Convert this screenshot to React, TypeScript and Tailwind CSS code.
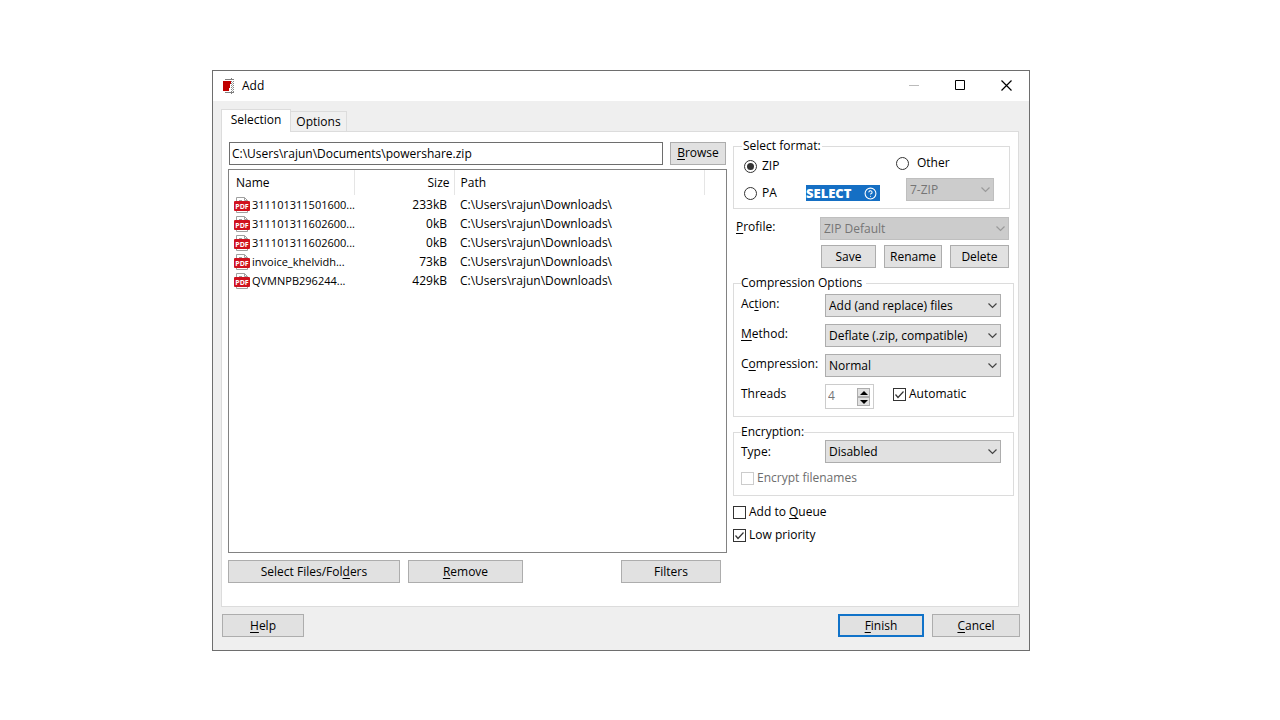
import { useState } from 'react';
import type { ReactNode } from 'react';
import clsx from 'clsx';
import { CircleHelp } from 'lucide-react';

interface FileEntry {
  name: string;
  size: string;
  path: string;
}

const files: FileEntry[] = [
  { name: '311101311501600...', size: '233kB', path: 'C:\\Users\\rajun\\Downloads\\' },
  { name: '311101311602600...', size: '0kB', path: 'C:\\Users\\rajun\\Downloads\\' },
  { name: '311101311602600...', size: '0kB', path: 'C:\\Users\\rajun\\Downloads\\' },
  { name: 'invoice_khelvidh...', size: '73kB', path: 'C:\\Users\\rajun\\Downloads\\' },
  { name: 'QVMNPB296244...', size: '429kB', path: 'C:\\Users\\rajun\\Downloads\\' },
];

function AppIcon() {
  return (
    <svg width="14" height="16" viewBox="0 0 14 16" shapeRendering="crispEdges" aria-hidden="true">
      <path d="M3 1h9v1H3zM3 14h9v1H3zM9 0h1v1H9zM9 15h1v1H9z" fill="#808080" />
      <path d="M1 3h8v3H8v4H7v3H1z" fill="#c00000" />
      <path d="M9.500 3v11M11.500 3v11" stroke="#888" strokeDasharray="1 1" />
      <path d="M10.500 4v10" stroke="#aaa" strokeDasharray="1 1" />
    </svg>
  );
}

function PdfIcon() {
  return (
    <svg width="16" height="16" viewBox="0 0 16 16" className="shrink-0" aria-hidden="true">
      <path d="M2.500 15.500V.5h8l3 3v12z" fill="#fff" stroke="#a0a0a0" />
      <path d="M10.500.5v3h3M5 3.500h3" fill="none" stroke="#a0a0a0" />
      <rect y="4" width="16" height="10" rx="1" fill="#d0121f" />
      <text x="8" y="11.500" textAnchor="middle" fontSize="7" fontWeight="700" fill="#fff">PDF</text>
    </svg>
  );
}

/* Underlined accelerator letter */
function Key({ children }: { children: string }) {
  return <span className="underline underline-offset-2">{children}</span>;
}

interface ButtonProps {
  children: ReactNode;
  className?: string;
  primary?: boolean;
}

function Button({ children, className, primary }: ButtonProps) {
  return (
    <button
      type="button"
      className={clsx(
        'h-[23px] bg-[#e1e1e1] text-center leading-4',
        primary ? 'border-2 border-[#1173c9]' : 'border border-[#adadad]',
        className
      )}
    >
      {children}
    </button>
  );
}

interface SelectProps {
  id?: string;
  label?: string;
  value: string;
  disabled?: boolean;
  className?: string;
}

function Select({ id, label, value, disabled, className }: SelectProps) {
  return (
    <div className={clsx('relative h-[23px]', className)}>
      <select
        id={id}
        aria-label={label}
        disabled={disabled}
        defaultValue={value}
        className={clsx(
          'block h-full w-full appearance-none border pl-[3px] pr-5 leading-4 opacity-100',
          disabled ? 'border-[#bfbfbf] bg-[#cccccc] text-[#757575]' : 'border-[#adadad] bg-[#e1e1e1]'
        )}
      >
        <option>{value}</option>
      </select>
      <svg
        width="9"
        height="6"
        viewBox="0 0 9 6"
        className={clsx(
          'pointer-events-none absolute right-1 top-[9px]',
          disabled ? 'text-[#9a9a9a]' : 'text-[#444]'
        )}
        aria-hidden="true"
      >
        <path d="M.5.5l4 4 4-4" fill="none" stroke="currentColor" strokeWidth="1.200" />
      </svg>
    </div>
  );
}

interface CheckboxProps {
  children: ReactNode;
  checked?: boolean;
  disabled?: boolean;
}

function Checkbox({ children, checked, disabled }: CheckboxProps) {
  return (
    <label className={clsx('flex h-4 items-center gap-[3px]', disabled && 'text-[#6d6d6d]')}>
      <span className="relative block size-[13px]">
        <input
          type="checkbox"
          defaultChecked={checked}
          disabled={disabled}
          className={clsx(
            'peer block size-[13px] appearance-none border bg-white',
            disabled ? 'border-[#cccccc]' : 'border-[#333]'
          )}
        />
        <svg
          width="13"
          height="13"
          viewBox="0 0 13 13"
          className="pointer-events-none absolute inset-0 hidden peer-checked:block"
          aria-hidden="true"
        >
          <path d="M2.500 6.500l2.500 3 5.500-6" fill="none" stroke="#333" strokeWidth="1.200" />
        </svg>
      </span>
      <span>{children}</span>
    </label>
  );
}

interface RadioProps {
  label: string;
  value: string;
  format: string;
  onSelect: (value: string) => void;
  className: string;
}

function Radio({ label, value, format, onSelect, className }: RadioProps) {
  return (
    <label className={clsx('flex h-4 items-center', className)}>
      <span className="relative block size-[13px]">
        <input
          type="radio"
          name="format"
          value={value}
          checked={format === value}
          onChange={() => onSelect(value)}
          className="peer block size-[13px] appearance-none rounded-full border border-[#333] bg-white"
        />
        <span className="pointer-events-none absolute inset-[3px] hidden rounded-full bg-[#333] peer-checked:block" />
      </span>
      {label}
    </label>
  );
}

function TitleBar() {
  return (
    <header className="flex h-[30px] items-center bg-white pb-px pl-[9px]">
      <AppIcon />
      <h1 className="ml-[6px] flex-1">Add</h1>
      <button type="button" aria-label="Minimize" className="flex h-full w-[46px] items-center justify-center">
        <svg width="11" height="11" viewBox="0 0 11 11">
          <path d="M0 5.500h10" stroke="#bbb" />
        </svg>
      </button>
      <button type="button" aria-label="Maximize" className="flex h-full w-[46px] items-center justify-center">
        <svg width="11" height="11" viewBox="0 0 11 11">
          <path d="M.5.5h9v9h-9z" fill="none" stroke="#000" />
        </svg>
      </button>
      <button type="button" aria-label="Close" className="flex h-full w-[46px] items-center justify-center">
        <svg width="11" height="11" viewBox="0 0 11 11">
          <path d="M.5.5l10 10M10.500.5l-10 10" stroke="#000" strokeWidth="1.200" />
        </svg>
      </button>
    </header>
  );
}

function FileList() {
  return (
    <div className="mt-1 min-h-96 border border-[#828282] bg-white">
      <table className="w-full table-fixed border-collapse">
        <colgroup>
          <col className="w-[125px]" />
          <col className="w-[100px]" />
          <col className="w-[250px]" />
          <col />
        </colgroup>
        <thead>
          <tr className="h-[25px] text-left">
            <th className="border-r border-[#e5e5e5] pl-[7px] font-normal">Name</th>
            <th className="border-r border-[#e5e5e5] pr-1 text-right font-normal">Size</th>
            <th className="border-r border-[#e5e5e5] pl-[6px] font-normal">Path</th>
            <td />
          </tr>
        </thead>
        <tbody>
          {files.map((file, index) => (
            <tr key={index} className="h-[19px]">
              <td className="pl-[5px]">
                <div className="flex items-center gap-0.5 whitespace-nowrap text-[11px]">
                  <PdfIcon />
                  {file.name}
                </div>
              </td>
              <td className="pr-[7px] text-right">{file.size}</td>
              <td className="pl-[6px]">{file.path}</td>
              <td />
            </tr>
          ))}
        </tbody>
      </table>
    </div>
  );
}

function FormatGroup() {
  const [format, setFormat] = useState('zip');

  return (
    <fieldset className="mr-1 border border-[#dcdcdc] pb-[7px] pl-[10px]">
      <legend className="-ml-0.5 px-px">Select format:</legend>
      <div className="flex">
        <div className="flex w-[152px] flex-col gap-[11px] pt-1">
          <Radio label="ZIP" value="zip" format={format} onSelect={setFormat} className="gap-[5px]" />
          <div className="flex items-center">
            <Radio label="PA" value="pa" format={format} onSelect={setFormat} className="w-[62px] gap-[5px]" />
            <button
              type="button"
              className="flex h-4 w-[74px] items-center justify-between bg-[#156fc4] pr-[3px] text-[13px] font-extrabold text-white"
            >
              SELECT
              <CircleHelp size={13} />
            </button>
          </div>
        </div>
        <div className="flex flex-col gap-[7px] pt-px">
          <Radio label="Other" value="other" format={format} onSelect={setFormat} className="gap-2" />
          <Select label="Other format" value="7-ZIP" disabled className="ml-[10px] w-[88px]" />
        </div>
      </div>
    </fieldset>
  );
}

function ProfileSection() {
  return (
    <div className="mr-[5px] mt-2">
      <div className="flex items-start pl-[3px]">
        <label htmlFor="profile" className="w-[84px] pt-0.5">
          <Key>P</Key>rofile:
        </label>
        <Select id="profile" value="ZIP Default" disabled className="flex-1" />
      </div>
      <div className="mt-[5px] flex justify-end gap-2">
        <Button className="w-[55px]">Save</Button>
        <Button className="w-[58px]">Rename</Button>
        <Button className="w-[59px]">Delete</Button>
      </div>
    </div>
  );
}

function Field({ id, label, value }: { id: string; label: ReactNode; value: string }) {
  return (
    <div className="flex items-start">
      <label htmlFor={id} className="w-[84px] pt-0.5">
        {label}
      </label>
      <Select id={id} value={value} className="flex-1" />
    </div>
  );
}

function ThreadsField() {
  return (
    <div className="flex items-start">
      <label htmlFor="threads" className="w-[84px] pt-0.5">
        Threads
      </label>
      <div className="flex h-[25px] w-[49px] border border-[#cccccc] pr-[3px] pt-[3px]">
        <input
          id="threads"
          type="number"
          defaultValue={4}
          disabled
          className="h-4 min-w-0 flex-1 pl-0.5 text-[#757575] [appearance:textfield]"
        />
        <div className="flex flex-col">
          <button type="button" aria-label="More threads" className="flex h-[9px] w-[13px] items-center justify-center border border-[#adadad] bg-[#e1e1e1]">
            <svg width="8" height="4" viewBox="0 0 8 4">
              <path d="M0 4l4-4 4 4z" />
            </svg>
          </button>
          <button type="button" aria-label="Fewer threads" className="flex h-[9px] w-[13px] items-center justify-center border border-[#adadad] bg-[#e1e1e1]">
            <svg width="8" height="4" viewBox="0 0 8 4">
              <path d="M0 0l4 4 4-4z" />
            </svg>
          </button>
        </div>
      </div>
      <div className="ml-[19px] pt-0.5">
        <Checkbox checked>Automatic</Checkbox>
      </div>
    </div>
  );
}

export default function App() {
  return (
    <main className="min-h-screen bg-white pl-[212px] pr-[250px] pt-[70px] font-['Open_Sans','Noto_Sans',sans-serif] text-[12px] leading-4 text-black">
      <section className="border border-[#6e6e6e] bg-[#efefef]">
        <TitleBar />
        <div className="pb-[13px] pl-2 pr-[9px] pt-2">
          <div role="tablist" className="flex items-end">
            <button
              type="button"
              role="tab"
              aria-selected="true"
              className="relative -mb-px h-[23px] w-[70px] border border-b-0 border-[#dcdcdc] bg-white pb-0.5"
            >
              Selection
            </button>
            <button
              type="button"
              role="tab"
              aria-selected="false"
              className="h-5 w-[56px] border border-b-0 border-l-0 border-[#dcdcdc] bg-[#f0f0f0]"
            >
              Options
            </button>
          </div>

          <div role="tabpanel" className="mr-px flex gap-1.5 border border-[#dcdcdc] bg-white pl-1.5 pr-1">
            <div className="min-w-0 flex-1 pb-[23px] pt-[9px]">
              <div className="flex h-6 items-center gap-[7px]">
                <input
                  type="text"
                  aria-label="Archive path"
                  defaultValue="C:\Users\rajun\Documents\powershare.zip"
                  className="ml-px h-[23px] min-w-0 flex-1 border border-[#6e6e6e] px-0.5"
                />
                <Button className="mr-px w-[56px]">
                  <Key>B</Key>rowse
                </Button>
              </div>
              <FileList />
              <div className="mt-[7px] flex gap-2">
                <Button className="w-[172px]">
                  Select Files/Fol<Key>d</Key>ers
                </Button>
                <Button className="w-[115px]">
                  <Key>R</Key>emove
                </Button>
                <Button className="ml-auto mr-1.5 w-[100px]">Filters</Button>
              </div>
            </div>

            <div className="w-[281px] shrink-0 pt-1.5">
              <FormatGroup />
              <ProfileSection />

              <fieldset className="mt-[7px] border border-[#dcdcdc] pb-[7px] pl-[7px] pr-3">
                <legend className="pr-1">Compression Options</legend>
                <div className="flex flex-col gap-[7px] pt-[3px]">
                  <Field id="action" label={<>Ac<Key>t</Key>ion:</>} value="Add (and replace) files" />
                  <Field id="method" label={<><Key>M</Key>ethod:</>} value="Deflate (.zip, compatible)" />
                  <Field id="compression" label={<>C<Key>o</Key>mpression:</>} value="Normal" />
                  <ThreadsField />
                </div>
              </fieldset>

              <fieldset className="mt-[7px] border border-[#dcdcdc] pb-[9px] pl-[7px] pr-3">
                <legend>Encryption:</legend>
                <div className="flex flex-col gap-[7px]">
                  <div className="flex items-center">
                    <label htmlFor="encryption" className="w-[84px]">
                      Type:
                    </label>
                    <Select id="encryption" value="Disabled" className="flex-1" />
                  </div>
                  <Checkbox disabled>Encrypt filenames</Checkbox>
                </div>
              </fieldset>

              <div className="mt-2 flex flex-col gap-[7px]">
                <Checkbox>
                  Add to <Key>Q</Key>ueue
                </Checkbox>
                <Checkbox checked>Low priority</Checkbox>
              </div>
            </div>
          </div>

          <footer className="mt-[7px] flex gap-2 pl-px">
            <Button className="mr-auto w-[82px]">
              <Key>H</Key>elp
            </Button>
            <Button primary className="w-[86px]">
              <Key>F</Key>inish
            </Button>
            <Button className="w-[88px]">
              <Key>C</Key>ancel
            </Button>
          </footer>
        </div>
      </section>
    </main>
  );
}
